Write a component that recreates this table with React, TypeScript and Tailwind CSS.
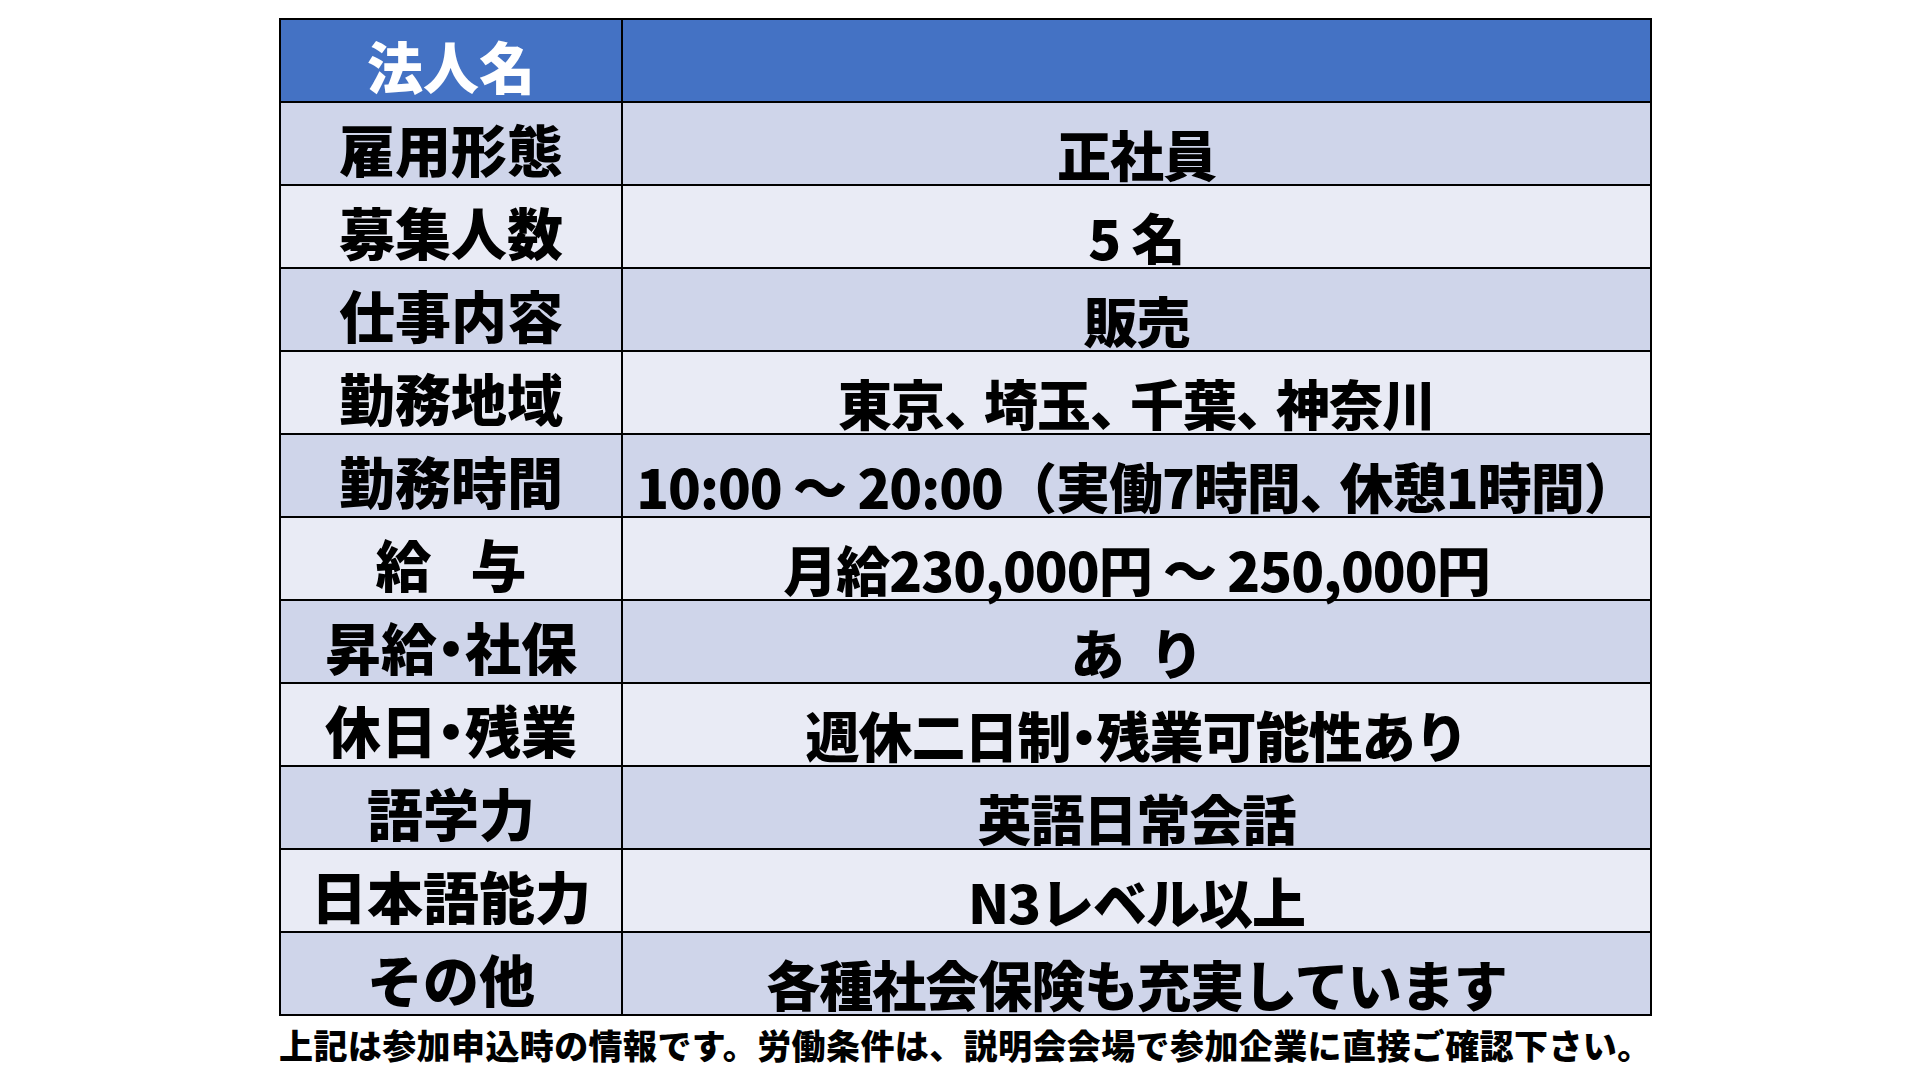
const rows = [
	{ label: "雇用形態", value: "正社員" },
	{ label: "募集人数", value: "5 名" },
	{ label: "仕事内容", value: "販売" },
	{ label: "勤務地域", value: "東京、埼玉、千葉、神奈川" },
	{ label: "勤務時間", value: "10:00 ～ 20:00（実働7時間、休憩1時間）" },
	{ label: "給\u2002\u2009与", value: "月給230,000円 ～ 250,000円" },
	{ label: "昇給・社保", value: "あ\u2002り" },
	{ label: "休日・残業", value: "週休二日制・残業可能性あり" },
	{ label: "語学力", value: "英語日常会話" },
	{ label: "日本語能力", value: "N3レベル以上" },
	{ label: "その他", value: "各種社会保険も充実しています" },
];

const font = { fontFamily: '"Noto Sans CJK JP", "Noto Sans", sans-serif' };

// narrow the middle dot and the comma the way the slide's font does
const Text = ({ text }: { text: string }) => (
	<>
		{text.split(/([・、])/).map((part, i) =>
			part === "・" ? (
				<span key={i} className="[font-feature-settings:'palt']">
					・
				</span>
			) : part === "、" ? (
				<span key={i} className="tracking-[-14px]">
					、
				</span>
			) : (
				part
			),
		)}
	</>
);

export default function App() {
	return (
		<div className="w-[1920px] h-[1080px] bg-white pt-[18px] pl-[279px]" style={font}>
			<div className="w-[1373px] border-2 border-black">
				<div className="flex h-[81px] bg-[#4472C4]">
					<div className="w-[342px] border-r-2 border-black flex items-center justify-center pt-[9px] text-[56px] leading-none font-black text-white">
						法人名
					</div>
					<div className="flex-1" />
				</div>

				{rows.map((row, i) => (
					<div
						key={row.label}
						className={`flex h-[83px] border-t-2 border-black ${
							i % 2 === 0 ? "bg-[#CFD5EA]" : "bg-[#E9EBF5]"
						}`}
					>
						<div className="w-[342px] border-r-2 border-black flex items-center justify-center pt-[9px] text-[56px] leading-none font-black text-black whitespace-nowrap">
							<Text text={row.label} />
						</div>
						<div className="flex-1 flex items-center justify-center pt-[20px] text-[54px] leading-none font-black text-black whitespace-nowrap tracking-[-1px]">
							<span>
								<Text text={row.value} />
							</span>
						</div>
					</div>
				))}
			</div>

			<div className="mt-[12px] text-[34px] leading-none font-black text-black tracking-[0.4px] whitespace-nowrap">
				上記は参加申込時の情報です。労働条件は、説明会会場で参加企業に直接ご確認下さい。
			</div>
		</div>
	);
}
